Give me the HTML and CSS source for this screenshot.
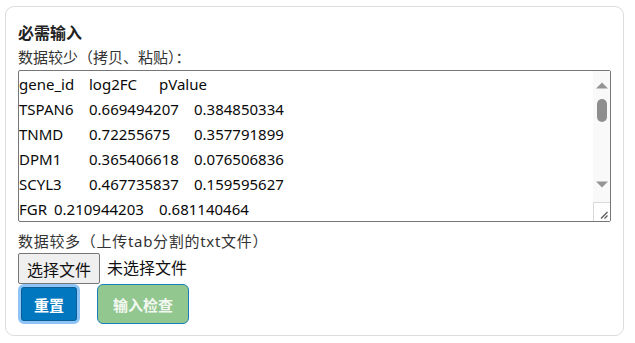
FILE: index.html
```html
<!DOCTYPE html>
<html lang="zh">
<head>
<meta charset="utf-8">
<link rel="stylesheet" href="styles.css">
</head>
<body>
<div class="card">
  <div class="title">必需输入</div>
  <label class="label" for="data">数据较少（拷贝、粘贴）：</label>
  <div class="data-box">
    <textarea id="data" class="data" spellcheck="false">gene_id	log2FC	pValue
TSPAN6	0.669494207	0.384850334
TNMD	0.72255675	0.357791899
DPM1	0.365406618	0.076506836
SCYL3	0.467735837	0.159595627
FGR	0.210944203	0.681140464
CFH	0.339526312	0.125480612
FUCA2	0.608112934	0.428196044
GCLC	0.271903456	0.092716538
NFYA	0.544820196	0.301928467
STPG1	0.183645019	0.775043216
NIPAL3	0.712048863	0.214635907
LAS1L	0.405971223	0.058331402
ENPP4	0.632189045	0.497205183
SEMA3F	0.128406995	0.846102557
CFTR	0.590372618	0.267814930
ANKIB1	0.349018274	0.136958204
CYP51A1	0.476625103	0.318470296
KRIT1	0.251739860	0.603918745
RAD52	0.687402153	0.042716389</textarea>
    <div class="vscroll" aria-hidden="true">
      <div class="sb-btn">
        <svg width="17" height="27" viewBox="0 0 17 27"><path d="M3 17.5 L9 11.5 L15 17.5 Z" fill="#959595"/></svg>
      </div>
      <div class="sb-track"><div class="sb-thumb"></div></div>
      <div class="sb-btn">
        <svg width="17" height="27" viewBox="0 0 17 27"><path d="M3 6.5 L15 6.5 L9 12.5 Z" fill="#959595"/></svg>
      </div>
      <div class="sb-corner">
        <svg width="17" height="19" viewBox="0 0 17 19"><path d="M0.5 19 V0.5 H17" fill="none" stroke="#d9d9d9"/><path d="M8 16.5 L14.5 10 M11.5 16.5 L14.5 13.5" stroke="#555" stroke-width="1.2"/></svg>
      </div>
    </div>
  </div>
  <div class="label label-wide">数据较多（上传tab分割的txt文件）</div>
  <div class="file-row">
    <button class="file-btn" type="button">选择文件</button>
    <span class="file-name">未选择文件</span>
  </div>
  <div class="actions">
    <button class="btn btn-reset" type="button">重置</button>
    <button class="btn btn-check" type="button">输入检查</button>
  </div>
</div>
</body>
</html>
```
FILE: styles.css
```css
html, body {
  margin: 0;
  background: #fff;
}
body {
  padding: 6px 11px 0 5px;
  font-family: "Noto Sans", "Noto Sans CJK SC", sans-serif;
  color: #333;
  font-size: 15px;
}
.card {
  border: 1px solid #dcdcdc;
  border-radius: 9px;
  padding: 14px 12px 11px 12px;
  display: flex;
  flex-direction: column;
}
.title {
  font-weight: bold;
  font-size: 16px;
  line-height: 24px;
  color: #222;
}
.label {
  display: block;
  line-height: 24px;
  font-size: 15px;
  color: #333;
}
.label-wide {
  letter-spacing: 0.7px;
}
.data-box {
  display: flex;
  box-sizing: border-box;
  height: 152px;
  margin: 1px 0 7px 0;
  border: 1px solid #767676;
  border-radius: 2px;
  background: #fff;
}
.data {
  flex: 1;
  min-width: 0;
  box-sizing: border-box;
  height: 100%;
  margin: 0;
  padding: 1px 0 0 0;
  border: none;
  outline: none;
  font-family: "Noto Sans", "Noto Sans CJK SC", sans-serif;
  font-size: 15px;
  line-height: 25px;
  color: #0a0a0a;
  tab-size: 35px;
  -moz-tab-size: 35px;
  resize: none;
  overflow: hidden;
  white-space: pre;
  background: transparent;
}
.vscroll {
  width: 17px;
  display: flex;
  flex-direction: column;
  background: #f9f9f9;
}
.sb-btn {
  height: 27px;
  flex: none;
}
.sb-btn svg, .sb-corner svg {
  display: block;
}
.sb-track {
  flex: 1;
  padding: 1px 3px 0 4px;
}
.sb-thumb {
  height: 23px;
  background: #8e8e8e;
  border-radius: 5px;
}
.sb-corner {
  height: 19px;
  flex: none;
  background: #fff;
}
.file-row {
  display: flex;
  align-items: flex-start;
  gap: 7px;
  height: 31px;
}
.file-btn {
  font-family: "Noto Sans", "Noto Sans CJK SC", sans-serif;
  font-size: 16px;
  color: #111;
  background: #efefef;
  border: 1px solid #767676;
  border-radius: 2px;
  height: 31px;
  padding: 0 8px;
}
.file-name {
  font-size: 16px;
  line-height: 31px;
  color: #111;
}
.actions {
  display: flex;
  gap: 17px;
}
.btn {
  font-family: "Noto Sans", "Noto Sans CJK SC", sans-serif;
  font-size: 15px;
  font-weight: bold;
  height: 40px;
  border-radius: 6px;
  color: #fff;
  padding: 0;
}
.btn-reset {
  width: 62px;
  background: #0077be;
  border: 3px solid #8ec5f6;
  box-shadow: inset 0 0 0 1px #0a5f98;
}
.btn-check {
  width: 92px;
  background: #92c790;
  border: 1px solid #1a7fb8;
  color: #f2f8f1;
}
```
